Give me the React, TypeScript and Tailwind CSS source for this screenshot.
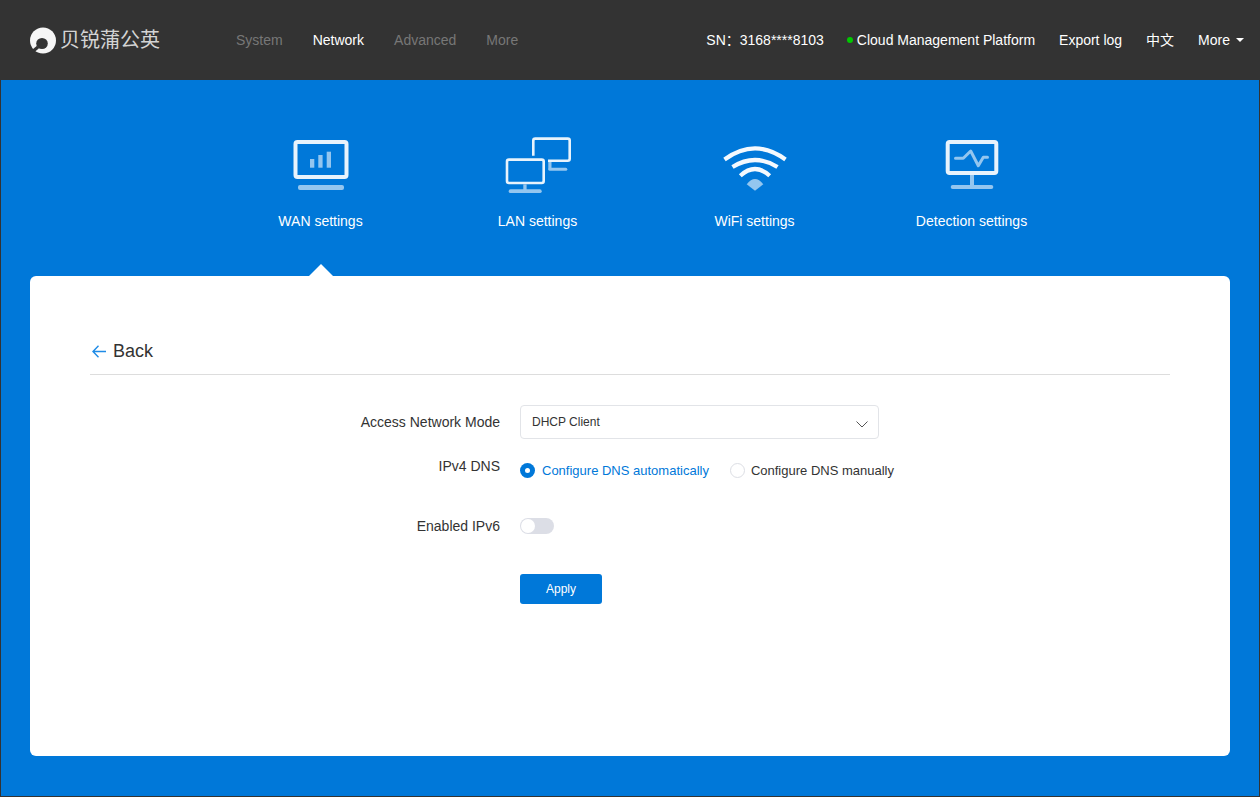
import React from "react";

const FONT = "font-['Liberation_Sans','Noto_Sans_CJK_SC',sans-serif]";
const LIGHT = "#e8f3fc";
const SOFT = "#94c6ef";

function IconBox({ children }: { children: React.ReactNode }) {
  return (
    <svg width="72" height="60" viewBox="0 0 72 60" fill="none">
      {children}
    </svg>
  );
}

function WanIcon() {
  return (
    <IconBox>
      <rect x="10.5" y="7" width="51" height="35" rx="2" stroke={LIGHT} strokeWidth="4" />
      <rect x="25" y="24" width="4.3" height="8.7" fill={SOFT} />
      <rect x="33.3" y="20" width="4.3" height="12.7" fill={SOFT} />
      <rect x="41.7" y="16.7" width="4.3" height="16" fill={SOFT} />
      <rect x="13" y="50" width="46" height="5" rx="2" fill={SOFT} />
    </IconBox>
  );
}

function LanIcon() {
  return (
    <IconBox>
      <path d="M31.3 20.7V5.6a2 2 0 0 1 2-2H65.7a2 2 0 0 1 2 2V23.7a2 2 0 0 1-2 2H46" stroke={LIGHT} strokeWidth="2.6" />
      <rect x="5" y="24.6" width="36.7" height="23.4" rx="2" stroke={LIGHT} strokeWidth="2.6" />
      <rect x="46.3" y="27" width="3.2" height="7" fill={SOFT} />
      <rect x="46.3" y="32.7" width="19" height="3" rx="1.5" fill={SOFT} />
      <rect x="21.3" y="49.3" width="3.3" height="6" fill={SOFT} />
      <rect x="6.7" y="54.3" width="33" height="3.7" rx="1.85" fill={SOFT} />
    </IconBox>
  );
}

function WifiIcon() {
  return (
    <IconBox>
      <path d="M5.5 24.5Q36 2.4 66.5 24.5" stroke="#f4f9fe" strokeWidth="4.2" />
      <path d="M13.5 32Q36 18 58.5 32" stroke="#f4f9fe" strokeWidth="4.2" />
      <path d="M21.3 40.7Q36 27.3 50.7 40.7" stroke="#f4f9fe" strokeWidth="4.2" />
      <path d="M27.7 49.3Q36 38.7 44.3 49.3L36 55.7Z" fill={SOFT} />
    </IconBox>
  );
}

function DetectIcon() {
  return (
    <IconBox>
      <rect x="11.7" y="7" width="48.6" height="31" rx="2" stroke={LIGHT} strokeWidth="4" />
      <path
        d="M19.5 23.3H27.3L34.7 16L42.3 30.7L47.3 22.3H51.5"
        stroke={SOFT}
        strokeWidth="3"
        strokeLinecap="round"
        strokeLinejoin="round"
      />
      <rect x="34" y="40" width="4" height="11" fill={SOFT} />
      <rect x="14.7" y="50" width="42.6" height="4" rx="2" fill={SOFT} />
    </IconBox>
  );
}

function Logo() {
  return (
    <div className="flex items-center">
      <svg width="26" height="27" viewBox="0 0 26 27">
        <circle cx="13" cy="13.5" r="13" fill="#f6f6f6" />
        <ellipse cx="12" cy="16.5" rx="5.8" ry="5.6" fill="#333333" />
        <path d="M8 20L2 25" stroke="#333333" strokeWidth="3.2" />
      </svg>
      <span className="ml-[4px] -mt-[3px] text-[20px] leading-[27px] font-normal text-[#d4d4d4] font-['Noto_Sans_CJK_SC',sans-serif]">
        贝锐蒲公英
      </span>
    </div>
  );
}

function Tab({ icon, label, active }: { icon: React.ReactNode; label: string; active?: boolean }) {
  return (
    <div className="relative flex h-[196px] w-[217px] flex-col items-center">
      <div className="mt-[55px] flex h-[60px] items-start justify-center">{icon}</div>
      <div className="mt-[18px] text-[14px] leading-[16px] text-white">{label}</div>
      {active && (
        <div className="absolute bottom-0 left-1/2 h-0 w-0 -translate-x-1/2 border-x-[12px] border-b-[12px] border-x-transparent border-b-white" />
      )}
    </div>
  );
}

export default function App() {
  return (
    <div className={`${FONT} h-[797px] w-[1260px] overflow-hidden border-x border-b border-[#333333] bg-[#0078d9]`}>
      <header className="flex h-[80px] items-center bg-[#333333] pl-[29px] pr-[15px] text-[14px]">
        <Logo />
        <nav className="ml-[76px] flex gap-[30px] text-[#777777]">
          <span>System</span>
          <span className="text-white">Network</span>
          <span>Advanced</span>
          <span>More</span>
        </nav>
        <div className="ml-auto flex items-center text-white">
          <span className="whitespace-pre">SN：</span>
          <span>3168****8103</span>
          <span className="ml-[23px] h-[6px] w-[6px] rounded-full bg-[#00c800]" />
          <span className="ml-[4px]">Cloud Management Platform</span>
          <span className="ml-[24px]">Export log</span>
          <span className="ml-[24px]">中文</span>
          <span className="ml-[24px]">More</span>
          <span className="ml-[6px] h-0 w-0 border-x-[4px] border-t-[4px] border-x-transparent border-t-white" />
        </div>
      </header>

      <div className="flex pl-[211px]">
        <Tab icon={<WanIcon />} label="WAN settings" active />
        <Tab icon={<LanIcon />} label="LAN settings" />
        <Tab icon={<WifiIcon />} label="WiFi settings" />
        <Tab icon={<DetectIcon />} label="Detection settings" />
      </div>

      <main className="mx-[29px] h-[480px] rounded-[6px] bg-white px-[60px] pt-[64px]">
        <div className="flex h-[35px] items-start border-b border-[#dddddd] pt-[1px]">
          <svg width="15" height="13" viewBox="0 0 15 13" fill="none" className="mt-[4px] ml-[2px]">
            <path d="M6.5 0.8L1 6.5L6.5 12.2M1 6.5H14" stroke="#1f8be6" strokeWidth="1.4" />
          </svg>
          <span className="ml-[6px] text-[18px] leading-[20px] text-[#333333]">Back</span>
        </div>

        <div className="mt-[30px] text-[14px] text-[#333333]">
          <div className="flex items-center">
            <label className="w-[410px] text-right">Access Network Mode</label>
            <div className="ml-[20px] flex h-[34px] w-[359px] items-center justify-between rounded-[4px] border border-[#e2e4e8] pl-[11px] pr-[10px] text-[12px]">
              <span>DHCP Client</span>
              <svg width="12" height="7" viewBox="0 0 12 7" fill="none" className="mt-[5px]">
                <path d="M0.5 0.5L6 6L11.5 0.5" stroke="#555555" strokeWidth="1" />
              </svg>
            </div>
          </div>

          <div className="mt-[19px] flex h-[24px] items-start">
            <label className="w-[410px] text-right leading-[16px]">IPv4 DNS</label>
            <div className="ml-[20px] flex h-[24px] items-center text-[13px]">
              <span className="flex h-[15px] w-[15px] items-center justify-center rounded-full bg-[#0078d9]">
                <span className="h-[5px] w-[5px] rounded-full bg-white" />
              </span>
              <span className="ml-[7px] pt-[2px] text-[#0078d9]">Configure DNS automatically</span>
              <span className="ml-[21px] h-[15px] w-[15px] rounded-full border border-[#dcdee4]" />
              <span className="ml-[6px] pt-[2px]">Configure DNS manually</span>
            </div>
          </div>

          <div className="mt-[32px] flex h-[24px] items-center">
            <label className="w-[410px] text-right">Enabled IPv6</label>
            <div className="ml-[20px] flex h-[16px] w-[34px] items-center rounded-full bg-[#dcdee6] pl-[1px]">
              <span className="h-[14px] w-[14px] rounded-full bg-white" />
            </div>
          </div>

          <div className="mt-[36px] pl-[430px]">
            <button className="flex h-[30px] w-[82px] items-center justify-center rounded-[3px] bg-[#0078d9] text-[12px] text-white">
              Apply
            </button>
          </div>
        </div>
      </main>
    </div>
  );
}
